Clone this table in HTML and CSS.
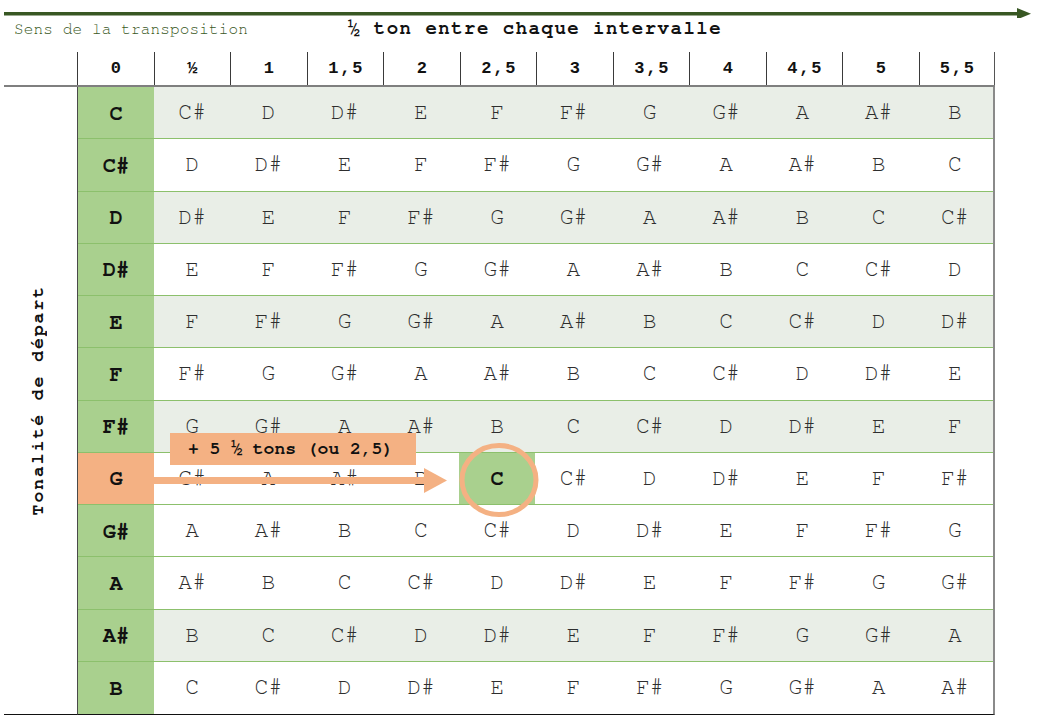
FILE: index.html
```html
<!DOCTYPE html>
<html lang="fr">
<head>
<meta charset="utf-8">
<link rel="stylesheet" href="styles.css">
</head>
<body>
<svg class="topArrow" width="1040" height="18" viewBox="0 0 1040 18">
  <rect x="4" y="12" width="1016" height="3.5" fill="#385723"/>
  <polygon points="1017,8 1031,13.75 1017,19.5" fill="#385723"/>
</svg>
<div class="captions">
  <span class="sens">Sens de la transposition</span>
  <span class="title">½ ton entre chaque intervalle</span>
</div>
<div class="sheet">
  <div class="corner"></div>
  <div class="head">
    <div>0</div><div>½</div><div>1</div><div>1,5</div><div>2</div><div>2,5</div><div>3</div><div>3,5</div><div>4</div><div>4,5</div><div>5</div><div>5,5</div>
  </div>
  <div class="side"><span class="vlabel">Tonalité de départ</span></div>
  <div class="body">
    <div class="row shade"><div class="key">C</div><div>C#</div><div>D</div><div>D#</div><div>E</div><div>F</div><div>F#</div><div>G</div><div>G#</div><div>A</div><div>A#</div><div>B</div></div>
    <div class="row"><div class="key">C#</div><div>D</div><div>D#</div><div>E</div><div>F</div><div>F#</div><div>G</div><div>G#</div><div>A</div><div>A#</div><div>B</div><div>C</div></div>
    <div class="row shade"><div class="key">D</div><div>D#</div><div>E</div><div>F</div><div>F#</div><div>G</div><div>G#</div><div>A</div><div>A#</div><div>B</div><div>C</div><div>C#</div></div>
    <div class="row"><div class="key">D#</div><div>E</div><div>F</div><div>F#</div><div>G</div><div>G#</div><div>A</div><div>A#</div><div>B</div><div>C</div><div>C#</div><div>D</div></div>
    <div class="row shade"><div class="key">E</div><div>F</div><div>F#</div><div>G</div><div>G#</div><div>A</div><div>A#</div><div>B</div><div>C</div><div>C#</div><div>D</div><div>D#</div></div>
    <div class="row"><div class="key">F</div><div>F#</div><div>G</div><div>G#</div><div>A</div><div>A#</div><div>B</div><div>C</div><div>C#</div><div>D</div><div>D#</div><div>E</div></div>
    <div class="row shade"><div class="key">F#</div><div>G</div><div>G#</div><div>A</div><div>A#</div><div>B</div><div>C</div><div>C#</div><div>D</div><div>D#</div><div>E</div><div>F</div></div>
    <div class="row"><div class="key start">G</div><div>G#</div><div>A</div><div>A#</div><div>B</div><div class="target">C</div><div>C#</div><div>D</div><div>D#</div><div>E</div><div>F</div><div>F#</div></div>
    <div class="row"><div class="key">G#</div><div>A</div><div>A#</div><div>B</div><div>C</div><div>C#</div><div>D</div><div>D#</div><div>E</div><div>F</div><div>F#</div><div>G</div></div>
    <div class="row"><div class="key">A</div><div>A#</div><div>B</div><div>C</div><div>C#</div><div>D</div><div>D#</div><div>E</div><div>F</div><div>F#</div><div>G</div><div>G#</div></div>
    <div class="row shade"><div class="key">A#</div><div>B</div><div>C</div><div>C#</div><div>D</div><div>D#</div><div>E</div><div>F</div><div>F#</div><div>G</div><div>G#</div><div>A</div></div>
    <div class="row"><div class="key">B</div><div>C</div><div>C#</div><div>D</div><div>D#</div><div>E</div><div>F</div><div>F#</div><div>G</div><div>G#</div><div>A</div><div>A#</div></div>

    <div class="tag">+ 5 ½ tons (ou 2,5)</div>
    <svg class="moveArrow" width="294" height="25" viewBox="0 0 294 25">
      <rect x="0" y="9" width="271" height="7" fill="#F4B183"/>
      <polygon points="270,0 293,12.5 270,25" fill="#F4B183"/>
    </svg>
    <svg class="ring" width="84" height="78" viewBox="0 0 84 78">
      <ellipse cx="42" cy="39" rx="37" ry="34.5" fill="none" stroke="#F4B183" stroke-width="5"/>
    </svg>
  </div>
</div>
</body>
</html>
```
FILE: styles.css
```css
html, body {
  margin: 0;
  padding: 0;
  background: #ffffff;
}
body {
  width: 1040px;
  height: 720px;
  overflow: hidden;
  font-family: "FreeMono", "Liberation Mono", monospace;
  color: #222;
}
.topArrow {
  display: block;
}
.captions {
  display: flex;
  height: 34px;
  align-items: flex-start;
}
.sens {
  margin-left: 14px;
  width: 334px;
  font-size: 16px;
  line-height: 22px;
  letter-spacing: 0.15px;
  color: #385723;
  white-space: nowrap;
}
.title {
  font-size: 19px;
  line-height: 22px;
  font-weight: bold;
  letter-spacing: 1.5px;
  color: #111;
  white-space: nowrap;
}
.sheet {
  display: grid;
  grid-template-columns: 73px 918px;
  grid-template-rows: 35px 628px;
  margin-left: 4px;
}
.corner {
  border-bottom: 2px solid #7f7f7f;
}
.head {
  display: grid;
  grid-template-columns: repeat(12, 1fr);
  border-bottom: 2px solid #7f7f7f;
}
.head div {
  border-left: 1px solid #3a3a3a;
  display: flex;
  align-items: center;
  justify-content: center;
  font-family: "Liberation Mono", monospace;
  font-size: 17px;
  font-weight: bold;
  letter-spacing: 1.8px;
  padding-left: 2px;
  color: #111;
}
.head div:last-child {
  border-right: 1px solid #555;
}
.side {
  display: flex;
  align-items: center;
  justify-content: center;
  padding-right: 6px;
  border-bottom: 1.5px solid #111;
}
.vlabel {
  writing-mode: vertical-rl;
  transform: rotate(180deg);
  font-size: 18px;
  font-weight: bold;
  letter-spacing: 2px;
  color: #111;
  white-space: nowrap;
}
.body {
  position: relative;
  display: grid;
  grid-template-rows: repeat(12, 1fr);
  border-left: 1px solid #4a4a4a;
  border-right: 2px solid #8a8a8a;
  border-bottom: 1.5px solid #111;
}
.row {
  display: grid;
  grid-template-columns: 76px repeat(11, 1fr);
  border-bottom: 1px solid #8cc06c;
}
.row:nth-last-child(4) {
  border-bottom: none;
}
.row.shade {
  background: #e9eee7;
}
.row div {
  display: flex;
  align-items: center;
  justify-content: center;
  font-size: 23px;
  color: #2e2e2e;
}
.row .key {
  background: #a9d08e;
  font-size: 22px;
  font-weight: bold;
  color: #111;
}
.row .key.start {
  background: #f4b183;
}
.row .target {
  background: #a9d08e;
  font-size: 22px;
  font-weight: bold;
  color: #111;
}
.tag {
  position: absolute;
  left: 92px;
  top: 346px;
  width: 228px;
  height: 32px;
  padding-left: 18px;
  background: #f4b183;
  display: flex;
  align-items: center;
  font-size: 18px;
  font-weight: bold;
  color: #111;
  white-space: nowrap;
}
.moveArrow {
  position: absolute;
  left: 76px;
  top: 381px;
}
.ring {
  position: absolute;
  left: 379px;
  top: 354px;
}
```
